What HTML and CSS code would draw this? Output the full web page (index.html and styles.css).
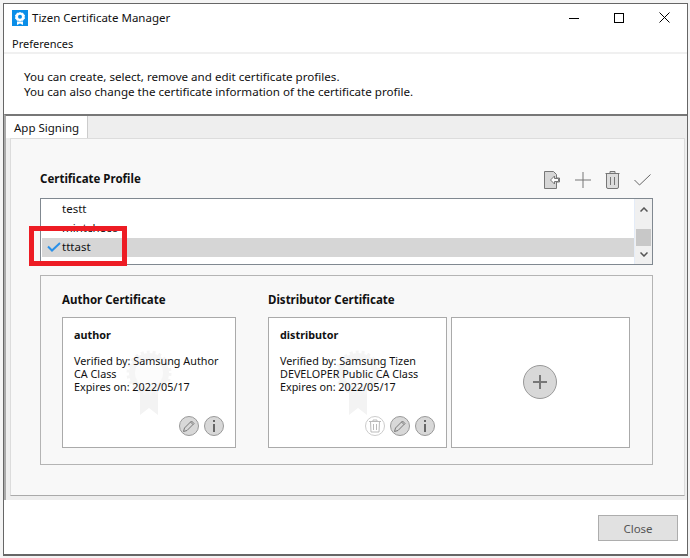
FILE: index.html
```html
<!DOCTYPE html>
<html lang="en">
<head>
<meta charset="utf-8">
<title>Tizen Certificate Manager</title>
<link rel="stylesheet" href="styles.css">
</head>
<body>
<div class="window">
  <header class="titlebar">
    <svg class="app-icon" width="16" height="16" viewBox="0 0 16 16">
      <rect width="16" height="16" fill="#0a8ee8"/>
      <path d="M8 2l1.400 .8 1.600 0 .8 1.400 1.200 1-.4 1.600 .4 1.600-1.200 1-.8 1.400-1.600 0L8 11.600l-1.400-.8-1.600 0-.8-1.400-1.200-1 .4-1.600-.4-1.600 1.200-1 .8-1.400 1.600 0z" fill="#fff"/>
      <circle cx="8" cy="6.800" r="2" fill="#0a8ee8"/>
      <path d="M5 11.500h6V15L8 13.500 5 15z" fill="#fff"/>
    </svg>
    <span class="title">Tizen Certificate Manager</span>
    <div class="win-controls">
      <svg width="10" height="10" viewBox="0 0 10 10"><path d="M0 5.500h10" stroke="#000" fill="none"/></svg>
      <svg width="10" height="10" viewBox="0 0 10 10"><rect x=".5" y=".5" width="9" height="9" stroke="#000" fill="none"/></svg>
      <svg width="11" height="11" viewBox="0 0 11 11"><path d="M.5 .5l10 10M10.500 .5l-10 10" stroke="#000" fill="none"/></svg>
    </div>
  </header>
  <nav class="menubar">Preferences</nav>
  <section class="intro">
    <p>You can create, select, remove and edit certificate profiles.</p>
    <p>You can also change the certificate information of the certificate profile.</p>
  </section>
  <section class="tabs">
    <div class="tab-strip"><div class="tab">App Signing</div></div>
    <div class="pane">
      <div class="profile-head">
        <h2 class="heading">Certificate Profile</h2>
        <div class="toolbar">
          <svg width="17" height="18" viewBox="0 0 17 18">
            <path d="M.5 .5h9l3 3v3.500h3l0 4h-3v6.500h-12z" fill="#d6d6d6" stroke="#777"/>
            <path d="M14.500 7.500h-4V5L6.500 9l4 4v-2.500h4z" fill="#fff" stroke="#777"/>
          </svg>
          <svg width="16" height="16" viewBox="0 0 16 16"><path d="M8 0v16M0 8h16" stroke="#777" fill="none"/></svg>
          <svg width="15" height="18" viewBox="0 0 15 18">
            <path d="M.5 2.500h14M5 2.500V.5h5v2M1.500 2.500v13.500q0 1.500 1.500 1.500h9q1.500 0 1.500-1.500V2.500z" fill="#ddd" stroke="#777"/>
            <path d="M5.500 6v8M9.500 6v8" stroke="#777" fill="none"/>
          </svg>
          <svg width="17" height="12" viewBox="0 0 17 12"><path d="M.5 6l5 5L16.500 .5" stroke="#666" fill="none"/></svg>
        </div>
      </div>
      <div class="list">
        <div class="rows">
          <div class="row">testt</div>
          <div class="row">mintcheco</div>
          <div class="row selected">
            <svg class="tick" width="14" height="10" viewBox="0 0 14 10"><path d="M1 4.500l4 4L13 1" stroke="#2a90e8" stroke-width="2" fill="none"/></svg>
            tttast
          </div>
        </div>
        <div class="scrollbar">
          <svg class="arrow" width="8" height="5" viewBox="0 0 8 5"><path d="M.5 4.500L4 1l3.500 3.500" stroke="#555" stroke-width="1.500" fill="none"/></svg>
          <div class="thumb"></div>
          <svg class="arrow" width="8" height="5" viewBox="0 0 8 5"><path d="M.5 .5L4 4l3.500-3.500" stroke="#555" stroke-width="1.500" fill="none"/></svg>
        </div>
        <div class="highlight"></div>
      </div>
      <div class="cert-group">
        <div class="cert-col">
          <h3 class="heading">Author Certificate</h3>
          <article class="card">
            <svg class="medal" width="46" height="66" viewBox="0 0 46 66">
              <path d="M14 38h18v27l-9-7-9 7z" fill="#f3f3f3"/>
              <circle cx="23" cy="23" r="20" fill="#f5f5f5"/>
              <circle cx="23" cy="23" r="21" fill="none" stroke="#f5f5f5" stroke-width="3" stroke-dasharray="3 3"/>
              <circle cx="23" cy="23" r="14" fill="#fcfcfc"/>
            </svg>
            <h4 class="card-name">author</h4>
            <p class="card-text">Verified by: Samsung Author<br>CA Class<br>Expires on: 2022/05/17</p>
            <div class="card-actions">
              <span class="round"><svg width="14" height="14" viewBox="0 0 14 14"><path d="M1.500 12.500l1-3.500 7-7 2.500 2.500-7 7zM8.500 3l2.500 2.500" fill="none" stroke="#777"/></svg></span>
              <span class="round"><svg width="14" height="14" viewBox="0 0 14 14"><path d="M7 5v8M7 1v2" fill="none" stroke="#666" stroke-width="2"/></svg></span>
            </div>
          </article>
        </div>
        <div class="cert-col">
          <h3 class="heading">Distributor Certificate</h3>
          <div class="card-pair">
            <article class="card card-wide">
              <svg class="medal" width="46" height="66" viewBox="0 0 46 66">
                <path d="M14 38h18v27l-9-7-9 7z" fill="#f3f3f3"/>
                <circle cx="23" cy="23" r="20" fill="#f5f5f5"/>
                <circle cx="23" cy="23" r="21" fill="none" stroke="#f5f5f5" stroke-width="3" stroke-dasharray="3 3"/>
                <circle cx="23" cy="23" r="14" fill="#fcfcfc"/>
              </svg>
              <h4 class="card-name">distributor</h4>
              <p class="card-text">Verified by: Samsung Tizen<br>DEVELOPER Public CA Class<br>Expires on: 2022/05/17</p>
              <div class="card-actions">
                <span class="round faded"><svg width="14" height="14" viewBox="0 0 14 14"><path d="M1 2.500h12M5 2.500V1h4v1.500M2.500 2.500l.5 10.500h8l.5-10.500M5.500 5v6M8.500 5v6" fill="none" stroke="#bbb"/></svg></span>
                <span class="round"><svg width="14" height="14" viewBox="0 0 14 14"><path d="M1.500 12.500l1-3.500 7-7 2.500 2.500-7 7zM8.500 3l2.500 2.500" fill="none" stroke="#777"/></svg></span>
                <span class="round"><svg width="14" height="14" viewBox="0 0 14 14"><path d="M7 5v8M7 1v2" fill="none" stroke="#666" stroke-width="2"/></svg></span>
              </div>
            </article>
            <article class="card card-wide card-add">
              <span class="round big"><svg width="16" height="16" viewBox="0 0 16 16"><path d="M8 1v14M1 8h14" stroke="#777" stroke-width="2" fill="none"/></svg></span>
            </article>
          </div>
        </div>
      </div>
    </div>
  </section>
  <footer class="footer"><button class="close-btn" type="button">Close</button></footer>
</div>
</body>
</html>
```

FILE: styles.css
```css
* { box-sizing: border-box; }
html, body { margin: 0; height: 100%; }
body {
  background: #f4f4f4;
  padding: 3px 2px 2px 3px;
  font: 11.500px/13px "Noto Sans", "Liberation Sans", sans-serif;
  color: #111;
  overflow: hidden;
}
.window {
  width: 685px;
  height: 553px;
  background: #fff;
  border: 1px solid #666;
  border-bottom-width: 2px;
  display: flex;
  flex-direction: column;
}
.titlebar { height: 27px; flex: none; display: flex; align-items: center; padding: 0 0 0 8px; }
.app-icon { flex: none; margin-top: 1px; }
.title { margin-left: 4px; font-size: 11.500px; }
.win-controls { margin-left: auto; display: flex; align-items: center; gap: 35px; padding-right: 17px; }
.menubar { height: 23px; flex: none; padding: 6px 0 0 8px; border-bottom: 2px solid #f0f0f0; font-size: 11px; }
.intro { height: 60px; flex: none; padding: 15px 0 0 20px; font-size: 11.600px; }
.intro p { margin: 0; line-height: 15px; }
.tabs { height: 386px; flex: none; background: #eee; border-top: 2px solid #777; border-left: 2px solid #aaa; padding: 0 2px 4px 0; display: flex; flex-direction: column; }
.tab-strip { height: 22px; flex: none; display: flex; }
.tab { width: 82px; height: 22px; background: #fff; padding: 5px 0 0 8px; border-right: 1px solid #ccc; }
.pane { flex: 1; background: #f8f8f8; border: 1px solid #dcdcdc; border-bottom: 1px solid #aaa; margin-left: 4px; padding: 0 31px 0 29px; }
.heading { margin: 0; font-size: 11.500px; font-weight: 700; color: #111; }
.profile-head { height: 59px; display: flex; align-items: flex-end; justify-content: space-between; padding-bottom: 13px; }
.toolbar { display: flex; align-items: center; gap: 14px; margin: 0 2px -4px 0; }
.list { position: relative; height: 67px; background: #fff; border: 1px solid #808890; display: flex; }
.rows { flex: 1; padding: 1px 0 0 1px; }
.row { height: 19px; line-height: 18px; padding-left: 20px; position: relative; }
.row.selected { background: #d6d6d6; }
.tick { position: absolute; left: 5px; top: 4px; }
.scrollbar { width: 18px; flex: none; background: #f0f0f0; border-left: 1px solid #e4ecf8; display: flex; flex-direction: column; align-items: center; padding-top: 8px; }
.arrow { flex: none; }
.thumb { width: 15px; height: 17px; flex: none; background: #c8c8c8; margin: 17px 0 6px; }
.highlight { position: absolute; left: -12px; top: 27px; width: 98px; height: 40px; border: 5px solid #ed1c24; }
.cert-group { height: 190px; margin-top: 10px; border: 1px solid #b4b4b4; padding: 17px 21px 16px; display: flex; gap: 32px; }
.cert-col { display: flex; flex-direction: column; gap: 11px; }
.card-pair { display: flex; gap: 4px; }
.card { position: relative; width: 174px; height: 131px; background: #fff; border: 1px solid #aaa; padding: 10px 11px 0; font-size: 10.800px; }
.card-wide { width: 179px; }
.card-name { margin: 0; font-size: 10.800px; font-weight: 700; }
.card-text { margin: 13px 0 0; position: relative; white-space: nowrap; }
.medal { position: absolute; left: calc(50% - 23px); top: 32px; }
.card-actions { position: absolute; right: 11px; bottom: 11px; display: flex; gap: 5px; }
.round { width: 20px; height: 20px; border-radius: 50%; background: #d8d8d8; border: 1px solid #999; display: flex; align-items: center; justify-content: center; }
.round.faded { background: #fff; border-color: #ccc; }
.round.big { width: 34px; height: 34px; }
.card-add { display: flex; align-items: center; justify-content: center; padding: 0 1px 1px 0; }
.footer { flex: 1; display: flex; justify-content: flex-end; align-items: flex-start; padding: 15px 9px 0 0; }
.close-btn { width: 80px; height: 26px; background: #e1e1e1; border: 1px solid #adadad; font: inherit; color: #555; padding: 0; }
```
